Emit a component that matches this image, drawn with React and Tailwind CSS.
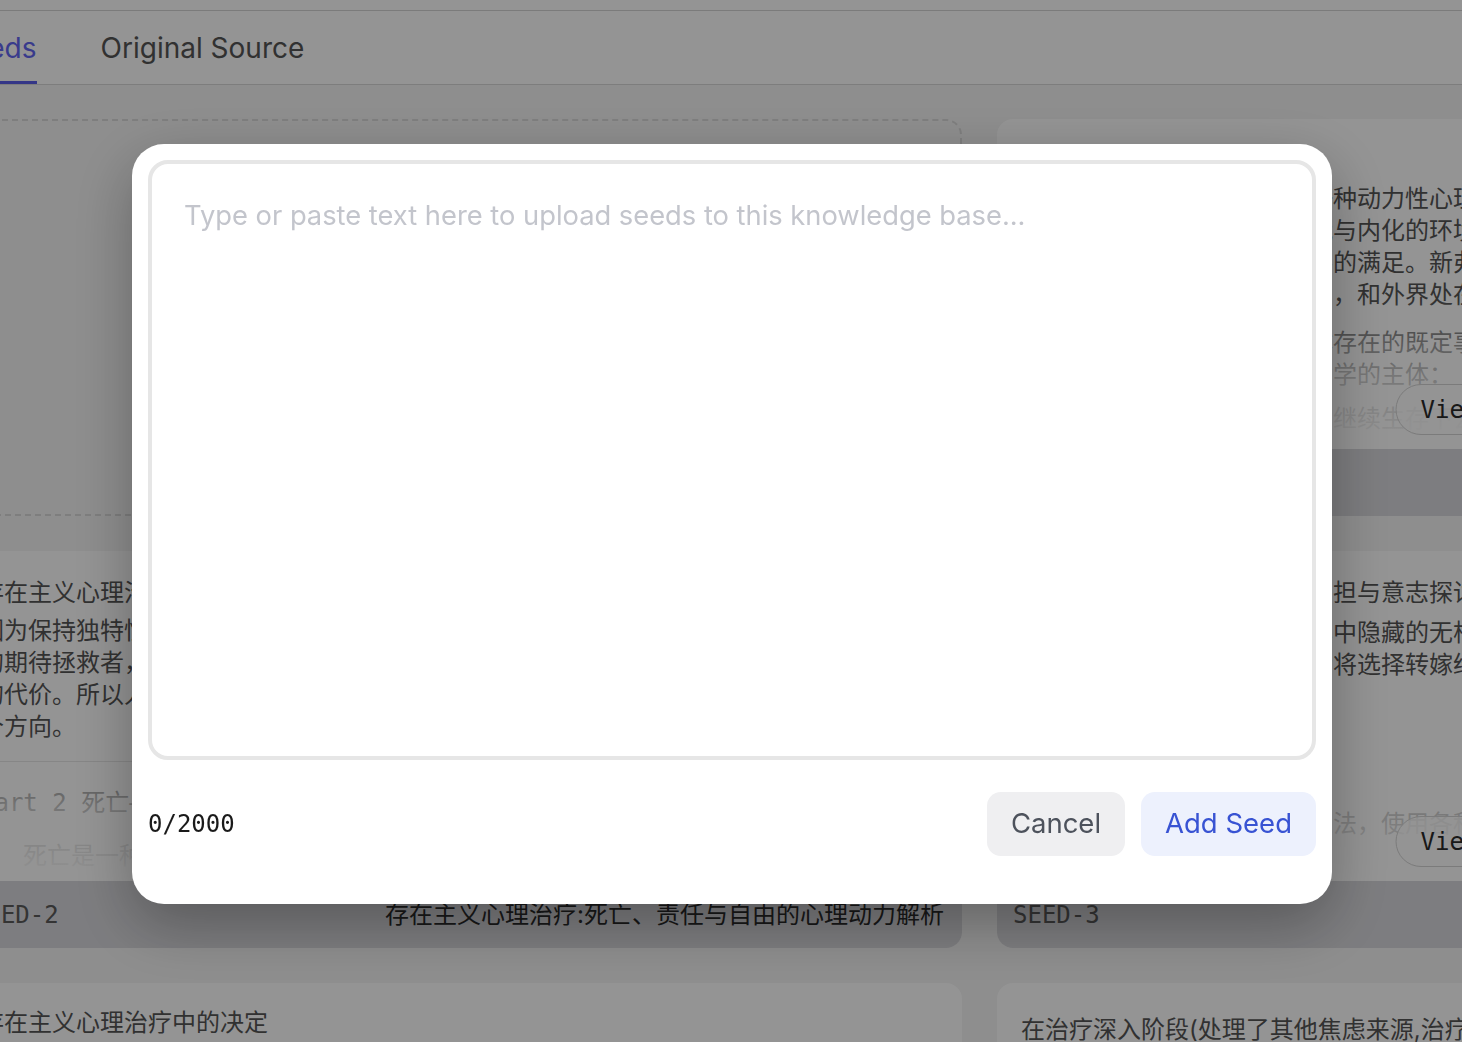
const SANS = "font-['Inter','Noto_Sans_CJK_SC',sans-serif]";
const MONO = "font-['DejaVu_Sans_Mono','Noto_Sans_CJK_SC',monospace]";

function Line({ children, className = "" }) {
  return <div className={"whitespace-nowrap " + className}>{children}</div>;
}

function Card({ children, label, title, contentClass = "pt-[26px]" }) {
  return (
    <div className="flex h-[397px] flex-col overflow-hidden rounded-2xl bg-white">
      <div className={"relative h-[330px] overflow-hidden px-6 text-[24px] leading-8 text-[#555555] " + contentClass}>
        {children}
        <div className="pointer-events-none absolute inset-x-0 bottom-0 h-[150px] bg-linear-to-b from-white/0 via-white/70 to-white" />
        <button className={"absolute left-1/2 top-[265px] h-[51px] -translate-x-1/2 rounded-full border border-[#d4d4d4] bg-white/70 px-6 text-[24px] text-[#2a2a2a] " + MONO}>
          View Detail
        </button>
      </div>
      <div className="flex h-[67px] items-center justify-between bg-[#d8d8dc] pl-4 pr-[18px]">
        <span className={"text-[24px] text-[#5a5a5a] " + MONO}>{label}</span>
        <span className="text-[24px] text-[#2a2a2a]">{title}</span>
      </div>
    </div>
  );
}

export default function App() {
  return (
    <div className={"relative h-screen w-full overflow-hidden bg-[#f5f5f5] " + SANS}>
      <div className="h-[11px] border-b border-[#d4d4d4] bg-white" />
      <div className="h-[74px] border-b border-[#d8d8d8] bg-white">
        <div className="-ml-[46px] flex h-full gap-16">
          <button className="flex h-full items-center border-b-[3px] border-[#5b5ee8] pt-1 text-[28px] text-[#6366f1]">
            Seeds
          </button>
          <button className="flex h-full items-center border-b-[3px] border-transparent pt-1 text-[28px] text-[#555555]">
            Original Source
          </button>
        </div>
      </div>

      <main className="-ml-[44px] grid w-[2047px] grid-cols-2 gap-x-[35px] gap-y-[35px] pt-[34px]">
        <div className="flex h-[397px] items-center justify-center rounded-2xl border-2 border-dashed border-[#dadada]">
          <span className="text-[24px] text-[#9a9a9a]">+ Add Seed</span>
        </div>

        <Card label="SEED-1" title="焦虑的来源：新弗洛伊德学派与存在主义的比较">
          <Line>焦虑的来源与动力</Line>
          <div className="mt-[6px]">
            <Line>新弗洛伊德学派认为焦虑是一种动力性心理现象，它源于个体与环境的冲突。</Line>
            <Line>它形成于早期人际关系中自我与内化的环境之间的冲突，以及需要得不到</Line>
            <Line>个体无法从环境获得安全需要的满足。新弗洛伊德学派强调人际关系的作用</Line>
            <Line>人会感到孤立无援且充满敌意，和外界处在一种对立的状态之中。</Line>
          </div>
          <div className="mt-4">
            <Line>存在主义则认为焦虑源于个体存在的既定事实，即死亡、自由、孤独与无意义</Line>
            <Line>它正是存在主义心理治疗与哲学的主体：</Line>
          </div>
          <Line className="mt-3">明知死亡终将来临，人却仍然继续生存下去。</Line>
        </Card>

        <Card label="SEED-2" title="存在主义心理治疗:死亡、责任与自由的心理动力解析">
          <Line>存在主义心理治疗的理论基础</Line>
          <div className="mt-[6px]">
            <Line>因为保持独特性意味着孤独，许多人宁愿放弃自我而融入群体之中。</Line>
            <Line>的期待拯救者，相信总有一个终极的拯救者会在危难时出现。</Line>
            <Line>的代价。所以人们往往在两种防御之间摇摆，无法真正面对死亡。</Line>
            <Line>个方向。</Line>
          </div>
          <div className="mt-[18px] h-px bg-[#dedede]" />
          <Line className={"mt-[25px] text-[#4a4a4a] " + MONO}>Part 2 死亡—存在的终极关怀</Line>
          <Line className="mt-[21px] pl-[43px]">死亡是一种最为明显的终极关怀，也是焦虑的原始来源。</Line>
        </Card>

        <Card label="SEED-3" title="自由与责任：选择的负担">
          <Line>第三部分：自由、责任感的负担与意志探讨</Line>
          <div className="mt-2">
            <Line>来访者面对自由时常常发现其中隐藏的无根基感，并因此感到恐惧。</Line>
            <Line>为逃避这种焦虑，他们往往会将选择转嫁给他人或环境。</Line>
          </div>
          <Line className={"mt-16 " + MONO}>## 治疗</Line>
          <Line className="mt-[31px]">治疗师识别来访者逃避责任之法，使用各种技术使其觉察。</Line>
        </Card>

        <Card label="SEED-4" title="存在主义心理治疗中的决定" contentClass="pt-[24px]">
          <Line>存在主义心理治疗中的决定</Line>
        </Card>

        <Card label="SEED-5" title="治疗的深入阶段" contentClass="pt-[31px]">
          <Line>在治疗深入阶段(处理了其他焦虑来源,治疗师开始关注来访者的意志)</Line>
        </Card>
      </main>

      <div className="fixed inset-0 flex items-start justify-center bg-black/[0.42] pl-[2px] pt-[144px]">
        <div className="flex h-[760px] w-[1200px] flex-col rounded-[32px] bg-white p-4 shadow-[0_20px_60px_rgba(0,0,0,0.3)]">
          <textarea
            className="h-[600px] w-full resize-none rounded-[20px] border-4 border-[#e6e6e6] px-8 py-8 text-[27.3px] leading-[40px] text-[#222] outline-none placeholder:text-[#c3c5cc]"
            placeholder="Type or paste text here to upload seeds to this knowledge base..."
          />
          <div className="flex items-center justify-between py-8">
            <span className={"text-[24px] text-[#1a1a1a] " + MONO}>0/2000</span>
            <div className="flex gap-4">
              <button className="h-16 rounded-[14px] bg-[#efeff1] px-6 text-[27.5px] text-[#4d525c]">Cancel</button>
              <button className="h-16 rounded-[14px] bg-[#edf1fd] px-6 text-[27.5px] text-[#3853d3]">Add Seed</button>
            </div>
          </div>
        </div>
      </div>
    </div>
  );
}
